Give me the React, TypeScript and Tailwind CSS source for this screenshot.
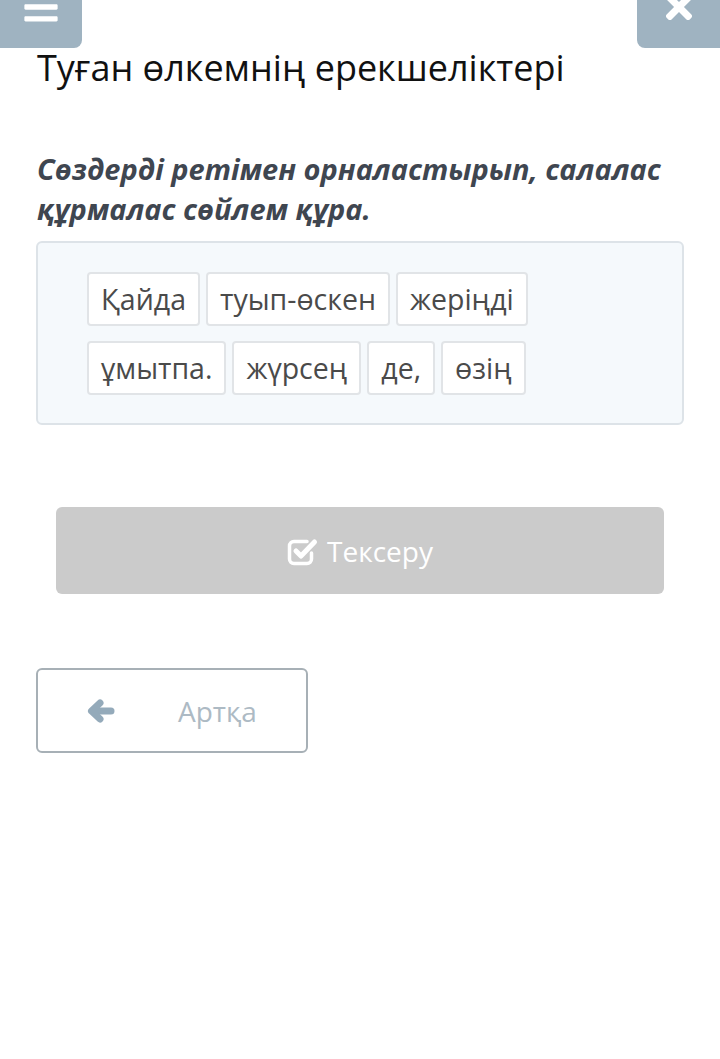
import React from "react";
import { FaBars, FaTimes } from "react-icons/fa";

const words = [
  ["Қайда", "туып-өскен", "жеріңді"],
  ["ұмытпа.", "жүрсең", "де,", "өзің"],
];

// check-square-o style icon with the tick poking out of the box
const CheckSquare = () => (
  <svg width="32" height="30" viewBox="0 0 32 30" fill="none" stroke="currentColor">
    <path
      d="M20 5.5H7a4.5 4.5 0 0 0-4.5 4.5v13a4.5 4.5 0 0 0 4.5 4.5h13a4.5 4.5 0 0 0 4.5-4.5v-6"
      strokeWidth="3.5"
      strokeLinecap="round"
    />
    <polyline points="9,15 14,20 27.5,6" strokeWidth="5" strokeLinecap="round" strokeLinejoin="round" />
  </svg>
);

const ArrowLeft = () => (
  <svg width="28" height="24" viewBox="0 0 28 24" fill="none" stroke="currentColor">
    <line x1="24" y1="12" x2="6" y2="12" strokeWidth="7" strokeLinecap="round" />
    <polyline points="13,4 4.5,12 13,20" strokeWidth="7" strokeLinecap="round" strokeLinejoin="round" />
  </svg>
);

const App = () => {
  return (
    <div
      className="w-[720px] min-h-[1059px] bg-white"
      style={{ fontFamily: "'Open Sans', 'Noto Sans', sans-serif" }}
    >
      {/* Top bar */}
      <div className="flex h-12 items-start justify-between">
        <button className="flex h-12 w-[82px] items-start justify-center rounded-br-lg bg-[#9fb3c1] text-white">
          <FaBars className="-mt-3 h-[38px] w-[38px]" />
        </button>
        <button className="flex h-12 w-[83px] items-start justify-center rounded-bl-lg bg-[#9fb3c1] text-white">
          <FaTimes className="-mt-3 h-[38px] w-[38px]" />
        </button>
      </div>

      {/* Title */}
      <h1 className="px-[37px] text-[36px] leading-[40px] font-normal text-[#111]">
        Туған өлкемнің ерекшеліктері
      </h1>

      {/* Instruction */}
      <p className="mt-[61px] px-[37px] text-[29px] leading-[40px] font-bold italic text-[#3f4650]">
        Сөздерді ретімен орналастырып, салалас құрмалас сөйлем құра.
      </p>

      {/* Word box */}
      <div className="mx-[36px] mt-3 flex flex-col gap-[15px] rounded-md border-2 border-[#dde3e8] bg-[#f5f9fc] pt-[29px] pb-[28px] pl-[49px]">
        {words.map((row, i) => (
          <div key={i} className="flex gap-[6px]">
            {row.map((w) => (
              <span
                key={w}
                className="rounded-[4px] border-2 border-[#e1e4e7] bg-white px-3 py-[5px] text-[28.5px] leading-[40px] text-[#4a4a4a]"
              >
                {w}
              </span>
            ))}
          </div>
        ))}
      </div>

      {/* Check button */}
      <div className="mx-[56px] mt-[82px] flex h-[87px] items-center justify-center gap-2 rounded-md bg-[#cbcbcb] text-white">
        <CheckSquare />
        <span className="text-[28px] leading-[40px]">Тексеру</span>
      </div>

      {/* Back button */}
      <div className="mx-[36px] mt-[74px] flex h-[85px] w-[272px] items-center rounded-md border-2 border-[#a7b0b6] bg-white">
        <span className="ml-[49px] text-[#94aaba]">
          <ArrowLeft />
        </span>
        <span className="ml-[63px] text-[28px] leading-[40px] text-[#adbac4]">Артқа</span>
      </div>
    </div>
  );
};

export default App;
